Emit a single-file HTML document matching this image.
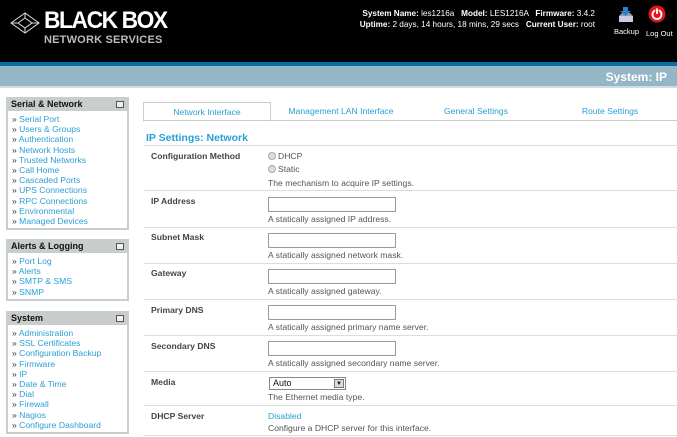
<!DOCTYPE html>
<html><head><meta charset="utf-8"><style>
*{margin:0;padding:0;box-sizing:border-box}
body{width:677px;height:437px;overflow:hidden;background:#fff;font-family:"Liberation Sans",Arial,sans-serif;font-size:9px;color:#333;position:relative}
.hdr{position:absolute;left:0;top:0;width:677px;height:62px;background:#000}
.stripe{position:absolute;left:0;top:62px;width:677px;height:4px;background:#0a6f9e}
.band{position:absolute;left:0;top:66px;width:677px;height:22px;background:#95b6c6;border-bottom:2px solid #cfdde4}
.band span{position:absolute;right:10px;top:4px;color:#fff;font-weight:bold;font-size:12px}
.logo{position:absolute;left:44px;top:9px;color:#fff;font-weight:bold;font-size:24px;letter-spacing:-1.5px;line-height:24px;transform:scaleX(0.95);transform-origin:left}
.logo2{position:absolute;left:44px;top:34px;color:#bbb;font-weight:bold;font-size:11px;letter-spacing:0.2px}
.info{position:absolute;right:82px;top:8px;color:#fff;font-size:8.2px;line-height:11px;text-align:right;white-space:nowrap}
.info b{font-weight:bold}
.side{position:absolute;left:6px;width:123px;background:#c9cecc;padding:0 2px 2px 2px}
.side h3{font-size:9px;font-weight:bold;color:#111;height:14px;line-height:14px;padding-left:3px;position:relative}
.side h3:after{content:"";position:absolute;right:3px;top:4px;width:6px;height:5px;border:1px solid #555;background:#eee}
.side ul{list-style:none;background:#fff;padding:3px 0 2px 4px}
.side li{line-height:10.2px;color:#2a9fd6;font-size:8.6px}
.side li:before{content:"» ";color:#333}
.tabs{position:absolute;left:143px;top:102px;width:534px;height:19px;border-bottom:1px solid #ccc}
.tab{position:absolute;top:0;height:19px;line-height:18px;text-align:center;color:#2a9fd6;font-size:8.6px}
.tab.act{left:0;width:128px;border:1px solid #ccc;border-bottom:1px solid #fff;height:20px;top:0;line-height:18px}
.h2{position:absolute;left:146px;top:132px;color:#2a9fd6;font-weight:bold;font-size:10.5px}
.hr{position:absolute;left:144px;width:533px;height:1px;background:#ddd}
.lab{position:absolute;left:151px;font-weight:bold;color:#444;font-size:8.6px}
.val{position:absolute;left:268px;color:#555;font-size:8.6px}
.inp{position:absolute;left:268px;width:128px;height:15px;border:1px solid #999;background:#fff}
.rad{display:inline-block;width:8px;height:8px;border-radius:50%;border:1px solid #aaa;background:#ddd;vertical-align:-1px;margin-right:2px}
</style></head><body>
<div class="hdr"></div>
<svg style="position:absolute;left:10px;top:12px" width="30" height="22" viewBox="0 0 30 22"><g fill="none" stroke="#ddd" stroke-width="1"><path d="M1 11 L15 1 L29 11 L15 21 Z"/><path d="M8 11 L15 6 L22 11 L15 16 Z"/><path d="M1 11 L8 11 M22 11 L29 11 M15 1 L15 6 M15 16 L15 21"/></g></svg>
<div class="logo">BLACK BOX</div>
<div class="logo2">NETWORK SERVICES</div>
<div class="info"><b>System Name:</b> les1216a &nbsp; <b>Model:</b> LES1216A &nbsp; <b>Firmware:</b> 3.4.2<br><b>Uptime:</b> 2 days, 14 hours, 18 mins, 29 secs &nbsp; <b>Current User:</b> root</div>
<svg style="position:absolute;left:617px;top:6px" width="18" height="17" viewBox="0 0 18 17"><path d="M2 10 L16 10 L16 16 L2 16 Z" fill="#ccd"/><path d="M2 10 L5 7 L13 7 L16 10" fill="#99a"/><path d="M6 1 L11 1 L11 5 L14 5 L8.5 10 L3 5 L6 5 Z" fill="#2a7fd0"/></svg>
<div style="position:absolute;left:614px;top:27px;color:#fff;font-size:7.5px">Backup</div>
<svg style="position:absolute;left:648px;top:5px" width="18" height="18" viewBox="0 0 18 18"><circle cx="9" cy="9" r="8.5" fill="#e0141e"/><circle cx="9" cy="9.5" r="4.5" fill="none" stroke="#fff" stroke-width="1.8"/><path d="M9 3 V9" stroke="#e0141e" stroke-width="3.5"/><path d="M9 3.5 V9" stroke="#fff" stroke-width="1.8"/></svg>
<div style="position:absolute;left:646px;top:29px;color:#fff;font-size:7.5px">Log Out</div>
<div class="stripe"></div>
<div class="band"><span>System: IP</span></div>

<div class="side" style="top:97px"><h3>Serial &amp; Network</h3><ul>
<li>Serial Port</li><li>Users &amp; Groups</li><li>Authentication</li><li>Network Hosts</li><li>Trusted Networks</li><li>Call Home</li><li>Cascaded Ports</li><li>UPS Connections</li><li>RPC Connections</li><li>Environmental</li><li>Managed Devices</li></ul></div>
<div class="side" style="top:239px"><h3>Alerts &amp; Logging</h3><ul>
<li>Port Log</li><li>Alerts</li><li>SMTP &amp; SMS</li><li>SNMP</li></ul></div>
<div class="side" style="top:311px"><h3>System</h3><ul>
<li>Administration</li><li>SSL Certificates</li><li>Configuration Backup</li><li>Firmware</li><li>IP</li><li>Date &amp; Time</li><li>Dial</li><li>Firewall</li><li>Nagios</li><li>Configure Dashboard</li></ul></div>

<div class="tabs">
<div class="tab act">Network Interface</div>
<div class="tab" style="left:128px;width:140px">Management LAN Interface</div>
<div class="tab" style="left:268px;width:130px">General Settings</div>
<div class="tab" style="left:400px;width:134px">Route Settings</div>
</div>
<div class="h2">IP Settings: Network</div>
<div class="hr" style="top:145px"></div>
<div class="lab" style="top:151px">Configuration Method</div>
<div class="val" style="top:151px"><span class="rad"></span>DHCP</div>
<div class="val" style="top:164px"><span class="rad"></span>Static</div>
<div class="val" style="top:178px">The mechanism to acquire IP settings.</div>
<div class="hr" style="top:190px"></div>
<div class="lab" style="top:196px">IP Address</div>
<div class="inp" style="top:197px"></div>
<div class="val" style="top:214px">A statically assigned IP address.</div>
<div class="hr" style="top:227px"></div>
<div class="lab" style="top:232px">Subnet Mask</div>
<div class="inp" style="top:233px"></div>
<div class="val" style="top:250px">A statically assigned network mask.</div>
<div class="hr" style="top:263px"></div>
<div class="lab" style="top:268px">Gateway</div>
<div class="inp" style="top:269px"></div>
<div class="val" style="top:286px">A statically assigned gateway.</div>
<div class="hr" style="top:299px"></div>
<div class="lab" style="top:305px">Primary DNS</div>
<div class="inp" style="top:305px"></div>
<div class="val" style="top:322px">A statically assigned primary name server.</div>
<div class="hr" style="top:335px"></div>
<div class="lab" style="top:341px">Secondary DNS</div>
<div class="inp" style="top:341px"></div>
<div class="val" style="top:358px">A statically assigned secondary name server.</div>
<div class="hr" style="top:371px"></div>
<div class="lab" style="top:377px">Media</div>
<div style="position:absolute;left:269px;top:377px;width:77px;height:13px;border:1px solid #888;background:#fff;font-size:9px;padding-left:3px;line-height:11px;color:#111">Auto<span style="position:absolute;right:1px;top:1px;width:10px;height:9px;border:1px solid #777;background:#ddd;font-size:6px;line-height:8px;text-align:center">▼</span></div>
<div class="val" style="top:392px">The Ethernet media type.</div>
<div class="hr" style="top:405px"></div>
<div class="lab" style="top:411px">DHCP Server</div>
<div class="val" style="top:411px;color:#2a9fd6">Disabled</div>
<div class="val" style="top:423px">Configure a DHCP server for this interface.</div>
<div class="hr" style="top:435px"></div>
</body></html>
